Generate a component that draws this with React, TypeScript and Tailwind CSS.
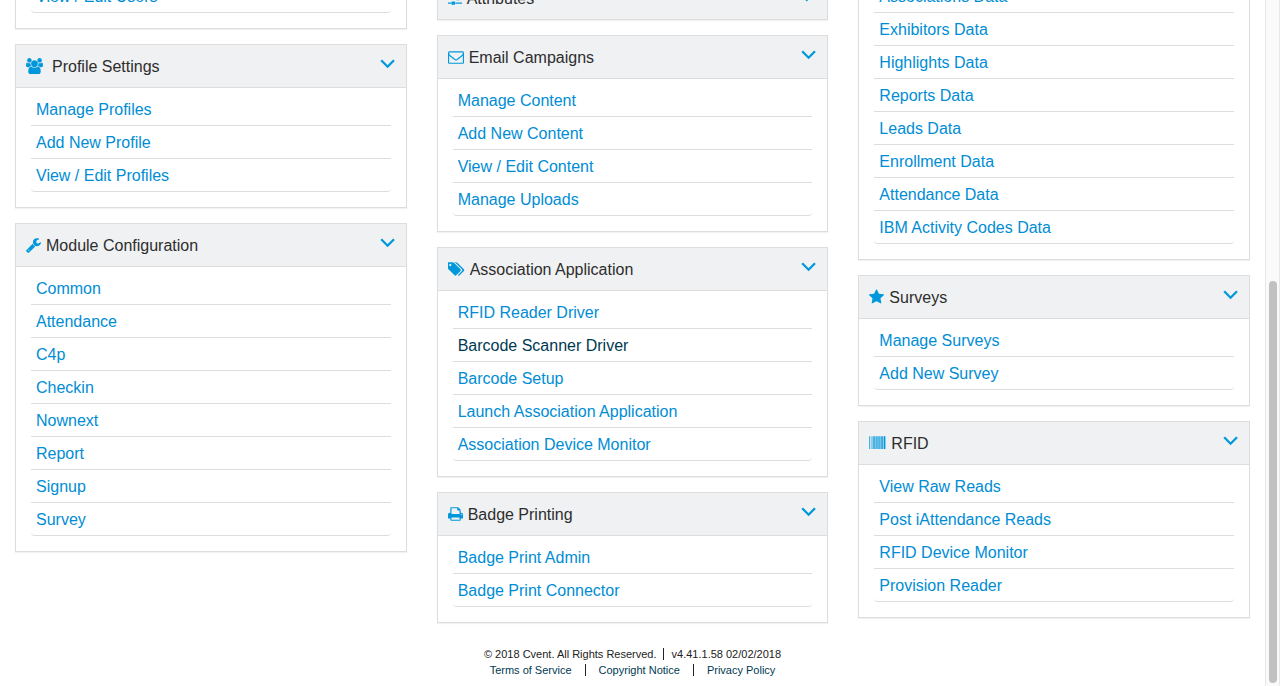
import { useState } from "react";

type IconDef = { viewBox: string; className: string; path: string };

const icons: Record<string, IconDef> = {
  users: {
    viewBox: "0 0 1920 1792",
    className: "h-4 w-[17px] mr-1",
    path: "M593 896q-162 5-265 128h-134q-82 0-138-40.5t-56-118.5q0-353 124-353 6 0 43.5 21t97.5 42.5 119 21.5q67 0 133-23-5 37-5 66 0 139 81 256zm1071 637q0 120-73 189.5t-194 69.5h-874q-121 0-194-69.5t-73-189.5q0-53 3.5-103.5t14-109 26.5-108.5 43-97.5 62-81 85.5-53.5 111.5-20q10 0 43 21.5t73 48 107 48 135 21.5 135-21.5 107-48 73-48 43-21.5q61 0 111.5 20t85.5 53.5 62 81 43 97.5 26.5 108.5 14 109 3.5 103.5zm-1024-1277q0 106-75 181t-181 75-181-75-75-181 75-181 181-75 181 75 75 181zm704 384q0 159-112.5 271.5t-271.5 112.5-271.5-112.5-112.5-271.5 112.5-271.5 271.5-112.5 271.5 112.5 112.5 271.5zm576 225q0 78-56 118.5t-138 40.5h-134q-103-123-265-128 81-117 81-256 0-29-5-66 66 23 133 23 59 0 119-21.5t97.5-42.5 43.5-21q124 0 124 353zm-128-609q0 106-75 181t-181 75-181-75-75-181 75-181 181-75 181 75 75 181z",
  },
  wrench: {
    viewBox: "64 0 1664 1792",
    className: "h-4 w-[15px]",
    path: "M448 1472q0-26-19-45t-45-19-45 19-19 45 19 45 45 19 45-19 19-45zm644-420l-682 682q-37 37-90 37-52 0-91-37l-106-108q-38-36-38-90 0-53 38-91l681-681q39 98 114.5 173.5t173.5 114.5zm634-435q0 39-23 106-47 134-164.5 217.5t-258.5 83.5q-185 0-316.5-131.5t-131.5-316.5 131.5-316.5 316.5-131.5q58 0 121.5 16.5t107.5 46.5q16 11 16 28t-16 28l-293 169v224l193 107q5-3 79-48.5t135.5-81 70.5-35.5q15 0 23.5 10t8.5 25z",
  },
  sliders: {
    viewBox: "0 0 1536 1792",
    className: "h-4 w-[14px]",
    path: "M352 1408v128h-352v-128h352zm352-128q26 0 45 19t19 45v256q0 26-19 45t-45 19h-256q-26 0-45-19t-19-45v-256q0-26 19-45t45-19h256zm160-384v128h-864v-128h864zm-640-512v128h-224v-128h224zm1312 1024v128h-736v-128h736zm-960-1152q26 0 45 19t19 45v256q0 26-19 45t-45 19h-256q-26 0-45-19t-19-45v-256q0-26 19-45t45-19h256zm640 512q26 0 45 19t19 45v256q0 26-19 45t-45 19h-256q-26 0-45-19t-19-45v-256q0-26 19-45t45-19h256zm320 128v128h-224v-128h224zm0-512v128h-864v-128h864z",
  },
  envelope: {
    viewBox: "0 0 1792 1792",
    className: "h-4 w-4",
    path: "M1664 1504v-768q-32 36-69 66-268 206-426 338-51 43-83 67t-86.5 48.5-102.5 24.5h-2q-48 0-102.5-24.5t-86.5-48.5-83-67q-158-132-426-338-37-30-69-66v768q0 13 9.5 22.5t22.5 9.5h1472q13 0 22.5-9.5t9.5-22.5zm0-1051v-24.5l-.5-13-3-12.5-5.5-9-9-7.5-14-2.5h-1472q-13 0-22.5 9.5t-9.5 22.5q0 168 147 284 193 152 401 317 6 5 35 29.5t46 37.5 44.5 31.5 50.5 27.5 43 9h2q20 0 43-9t50.5-27.5 44.5-31.5 46-37.5 35-29.5q208-165 401-317 54-43 100.5-115.5t46.5-131.5zm128-37v1088q0 66-47 113t-113 47h-1472q-66 0-113-47t-47-113v-1088q0-66 47-113t113-47h1472q66 0 113 47t47 113z",
  },
  tags: {
    viewBox: "64 0 1920 1792",
    className: "h-4 w-[17px]",
    path: "M448 448q0-53-37.5-90.5t-90.5-37.5-90.5 37.5-37.5 90.5 37.5 90.5 90.5 37.5 90.5-37.5 37.5-90.5zm1067 576q0 53-37 90l-491 492q-39 37-91 37-53 0-90-37l-715-716q-38-37-64.5-101t-26.5-117v-416q0-52 38-90t90-38h416q53 0 117 26.5t102 64.5l715 714q37 39 37 91zm384 0q0 53-37 90l-491 492q-39 37-91 37-36 0-59-14t-53-45l470-470q37-37 37-90 0-52-37-91l-715-714q-38-38-102-64.5t-117-26.5h224q53 0 117 26.5t102 64.5l715 714q37 39 37 91z",
  },
  printer: {
    viewBox: "64 0 1664 1792",
    className: "h-4 w-[15px]",
    path: "M448 1536h896v-256h-896v256zm0-640h896v-384h-160q-40 0-68-28t-28-68v-160h-640v640zm1152 64q0-26-19-45t-45-19-45 19-19 45 19 45 45 19 45-19 19-45zm128 0v416q0 13-9.5 22.5t-22.5 9.5h-224v160q0 40-28 68t-68 28h-960q-40 0-68-28t-28-68v-160h-224q-13 0-22.5-9.5t-9.5-22.5v-416q0-79 56.5-135.5t135.5-56.5h64v-544q0-40 28-68t68-28h672q40 0 88 20t76 48l152 152q28 28 48 76t20 88v256h64q79 0 135.5 56.5t56.5 135.5z",
  },
  star: {
    viewBox: "64 0 1664 1792",
    className: "h-4 w-[15px]",
    path: "M1728 647q0 22-26 48l-363 354 86 500q1 7 1 20 0 21-10.5 35.5t-30.5 14.5q-19 0-40-12l-449-236-449 236q-22 12-40 12-21 0-31.5-14.5t-10.5-35.5q0-6 2-20l86-500-364-354q-25-27-25-48 0-37 56-46l502-73 225-455q19-41 49-41t49 41l225 455 502 73q56 9 56 46z",
  },
  barcode: {
    viewBox: "0 0 17 16",
    className: "h-4 w-[17px]",
    path: "M0 1.3h.6v12.6H0zM.9 1.3h.3v12.6H.9zM2.1 1.3h.4v12.6h-.4zM3.1 1.3h.4v12.6h-.4zM4 1.3h.7v12.6H4zM5.2 1.3h.7v12.6h-.7zM6.4 1.3h.5v12.6h-.5zM7.2 1.3h.7v12.6h-.7zM8.2 1.3h.6v12.6h-.6zM9.1 1.3h.6v12.6h-.6zM10 1.3h.6v12.6H10zM10.9 1.3h.6v12.6h-.6zM12 1.3h.7v12.6H12zM13 1.3h.8v12.6H13zM14.2 1.3h.4v12.6h-.4zM15 1.3h1v12.6h-1zM16.3 1.3h.4v12.6h-.4z",
  },
};

type PanelProps = {
  title?: string;
  icon?: string;
  links?: string[];
  collapsed?: boolean;
};

const ACTIVE_LINK = "Barcode Scanner Driver";

function Panel({ title, icon, links = [], collapsed = false }: PanelProps) {
  const [open, setOpen] = useState(!collapsed);
  const glyph = icon ? icons[icon] : undefined;
  return (
    <section
      className={
        title
          ? "border border-[#dddddd] bg-white shadow-[0_1px_1px_rgba(0,0,0,0.05)]"
          : "border border-t-0 border-[#dddddd] bg-white shadow-[0_1px_1px_rgba(0,0,0,0.05)]"
      }
    >
      {title && (
        <h2 className={open ? "border-b border-[#dddddd]" : ""}>
          <button
            type="button"
            aria-expanded={open}
            onClick={() => setOpen(!open)}
            className="flex h-[42px] w-full items-center bg-[#f0f1f3] px-2.5 text-left"
          >
            <span className="flex items-center gap-[5px]">
              {glyph && (
                <svg
                  aria-hidden="true"
                  viewBox={glyph.viewBox}
                  preserveAspectRatio="none"
                  fill="currentColor"
                  className={`text-[#0098db] ${glyph.className}`}
                >
                  <path d={glyph.path} />
                </svg>
              )}
              <span className="pt-0.5 text-[#2d2d2d]">{title}</span>
            </span>
            <svg
              aria-hidden="true"
              viewBox="0 0 16 16"
              fill="none"
              stroke="currentColor"
              strokeWidth="2.3"
              className="ml-auto h-4 w-4 overflow-visible text-[#0098db]"
            >
              <path d={open ? "M1.2 2.3l6.4 6.4L14 2.3" : "M5 -2.2l6.4 6.4L5 10.6"} />
            </svg>
          </button>
        </h2>
      )}
      {open && (
        <ul className={title ? "px-[15px] pt-[5px] pb-[15px]" : "px-[15px] pt-1 pb-[15px]"}>
          {links.map((label) => (
            <li
              key={label}
              className="border-b border-[#dddddd] px-[5px] pt-[5px] pb-[3px] last:rounded-b"
            >
              <a
                href="#"
                className={
                  label === ACTIVE_LINK ? "text-[#003a52]" : "text-[#008dd5] hover:text-[#003a52]"
                }
              >
                {label}
              </a>
            </li>
          ))}
        </ul>
      )}
    </section>
  );
}

const columns: PanelProps[][] = [
  [
    { links: ["View / Edit Users"] },
    {
      title: "Profile Settings",
      icon: "users",
      links: ["Manage Profiles", "Add New Profile", "View / Edit Profiles"],
    },
    {
      title: "Module Configuration",
      icon: "wrench",
      links: ["Common", "Attendance", "C4p", "Checkin", "Nownext", "Report", "Signup", "Survey"],
    },
  ],
  [
    { title: "Attributes", icon: "sliders", collapsed: true },
    {
      title: "Email Campaigns",
      icon: "envelope",
      links: ["Manage Content", "Add New Content", "View / Edit Content", "Manage Uploads"],
    },
    {
      title: "Association Application",
      icon: "tags",
      links: [
        "RFID Reader Driver",
        "Barcode Scanner Driver",
        "Barcode Setup",
        "Launch Association Application",
        "Association Device Monitor",
      ],
    },
    {
      title: "Badge Printing",
      icon: "printer",
      links: ["Badge Print Admin", "Badge Print Connector"],
    },
  ],
  [
    {
      links: [
        "Associations Data",
        "Exhibitors Data",
        "Highlights Data",
        "Reports Data",
        "Leads Data",
        "Enrollment Data",
        "Attendance Data",
        "IBM Activity Codes Data",
      ],
    },
    { title: "Surveys", icon: "star", links: ["Manage Surveys", "Add New Survey"] },
    {
      title: "RFID",
      icon: "barcode",
      links: ["View Raw Reads", "Post iAttendance Reads", "RFID Device Monitor", "Provision Reader"],
    },
  ],
];

export default function App() {
  return (
    <div className="flex min-h-screen overflow-hidden bg-white font-['Liberation_Sans',Arial,sans-serif] text-base">
      <div className="min-w-0 flex-1">
        <main className="-mt-6 grid grid-cols-3 items-start gap-[30px] px-[15px]">
          {columns.map((panels, index) => (
            <div key={index} className="flex flex-col gap-[15px]">
              {panels.map((panel, i) => (
                <Panel key={i} {...panel} />
              ))}
            </div>
          ))}
        </main>
        <footer className="mt-[23px] flex flex-col items-center text-[11px] leading-4 text-[#222222]">
          <p className="flex items-center">
            <span className="border-r border-[#222222] pr-[6px] leading-3">
              © 2018 Cvent. All Rights Reserved.
            </span>
            <span className="pl-2">v4.41.1.58 02/02/2018</span>
          </p>
          <nav className="flex items-center text-[#003a52]">
            <a href="#" className="pr-[13px] leading-3">Terms of Service</a>
            <a href="#" className="border-x border-[#222222] px-[13px] leading-3">Copyright Notice</a>
            <a href="#" className="pl-[13px] leading-4">Privacy Policy</a>
          </nav>
        </footer>
      </div>
      <div className="flex w-[15px] shrink-0 flex-col border-x border-[#e8e8e8] bg-[#fafafa] pr-0.5 pb-[3px] pl-[3px]">
        <div className="flex-[281]" />
        <div className="flex-[402] rounded-full bg-[#c1c1c1]" />
      </div>
    </div>
  );
}
